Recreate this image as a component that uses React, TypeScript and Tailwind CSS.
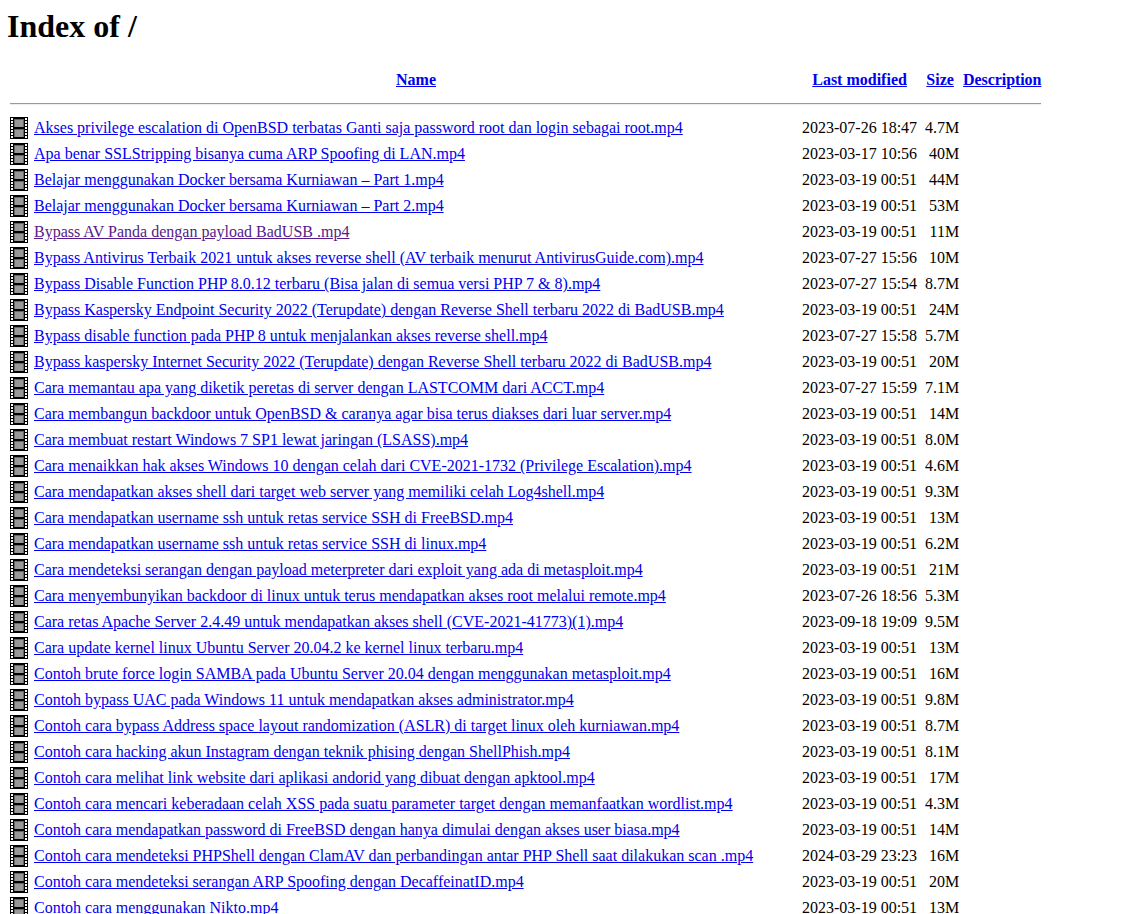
const serif = "font-['Liberation_Serif','Times_New_Roman',serif]";

const rows: [string, string, string, boolean?][] = [
  ["Akses privilege escalation di OpenBSD terbatas Ganti saja password root dan login sebagai root.mp4", "2023-07-26 18:47", "4.7M"],
  ["Apa benar SSLStripping bisanya cuma ARP Spoofing di LAN.mp4", "2023-03-17 10:56", "40M"],
  ["Belajar menggunakan Docker bersama Kurniawan – Part 1.mp4", "2023-03-19 00:51", "44M"],
  ["Belajar menggunakan Docker bersama Kurniawan – Part 2.mp4", "2023-03-19 00:51", "53M"],
  ["Bypass AV Panda dengan payload BadUSB .mp4", "2023-03-19 00:51", "11M", true],
  ["Bypass Antivirus Terbaik 2021 untuk akses reverse shell (AV terbaik menurut AntivirusGuide.com).mp4", "2023-07-27 15:56", "10M"],
  ["Bypass Disable Function PHP 8.0.12 terbaru (Bisa jalan di semua versi PHP 7 & 8).mp4", "2023-07-27 15:54", "8.7M"],
  ["Bypass Kaspersky Endpoint Security 2022 (Terupdate) dengan Reverse Shell terbaru 2022 di BadUSB.mp4", "2023-03-19 00:51", "24M"],
  ["Bypass disable function pada PHP 8 untuk menjalankan akses reverse shell.mp4", "2023-07-27 15:58", "5.7M"],
  ["Bypass kaspersky Internet Security 2022 (Terupdate) dengan Reverse Shell terbaru 2022 di BadUSB.mp4", "2023-03-19 00:51", "20M"],
  ["Cara memantau apa yang diketik peretas di server dengan LASTCOMM dari ACCT.mp4", "2023-07-27 15:59", "7.1M"],
  ["Cara membangun backdoor untuk OpenBSD & caranya agar bisa terus diakses dari luar server.mp4", "2023-03-19 00:51", "14M"],
  ["Cara membuat restart Windows 7 SP1 lewat jaringan (LSASS).mp4", "2023-03-19 00:51", "8.0M"],
  ["Cara menaikkan hak akses Windows 10 dengan celah dari CVE-2021-1732 (Privilege Escalation).mp4", "2023-03-19 00:51", "4.6M"],
  ["Cara mendapatkan akses shell dari target web server yang memiliki celah Log4shell.mp4", "2023-03-19 00:51", "9.3M"],
  ["Cara mendapatkan username ssh untuk retas service SSH di FreeBSD.mp4", "2023-03-19 00:51", "13M"],
  ["Cara mendapatkan username ssh untuk retas service SSH di linux.mp4", "2023-03-19 00:51", "6.2M"],
  ["Cara mendeteksi serangan dengan payload meterpreter dari exploit yang ada di metasploit.mp4", "2023-03-19 00:51", "21M"],
  ["Cara menyembunyikan backdoor di linux untuk terus mendapatkan akses root melalui remote.mp4", "2023-07-26 18:56", "5.3M"],
  ["Cara retas Apache Server 2.4.49 untuk mendapatkan akses shell (CVE-2021-41773)(1).mp4", "2023-09-18 19:09", "9.5M"],
  ["Cara update kernel linux Ubuntu Server 20.04.2 ke kernel linux terbaru.mp4", "2023-03-19 00:51", "13M"],
  ["Contoh brute force login SAMBA pada Ubuntu Server 20.04 dengan menggunakan metasploit.mp4", "2023-03-19 00:51", "16M"],
  ["Contoh bypass UAC pada Windows 11 untuk mendapatkan akses administrator.mp4", "2023-03-19 00:51", "9.8M"],
  ["Contoh cara bypass Address space layout randomization (ASLR) di target linux oleh kurniawan.mp4", "2023-03-19 00:51", "8.7M"],
  ["Contoh cara hacking akun Instagram dengan teknik phising dengan ShellPhish.mp4", "2023-03-19 00:51", "8.1M"],
  ["Contoh cara melihat link website dari aplikasi andorid yang dibuat dengan apktool.mp4", "2023-03-19 00:51", "17M"],
  ["Contoh cara mencari keberadaan celah XSS pada suatu parameter target dengan memanfaatkan wordlist.mp4", "2023-03-19 00:51", "4.3M"],
  ["Contoh cara mendapatkan password di FreeBSD dengan hanya dimulai dengan akses user biasa.mp4", "2023-03-19 00:51", "14M"],
  ["Contoh cara mendeteksi PHPShell dengan ClamAV dan perbandingan antar PHP Shell saat dilakukan scan .mp4", "2024-03-29 23:23", "16M"],
  ["Contoh cara mendeteksi serangan ARP Spoofing dengan DecaffeinatID.mp4", "2023-03-19 00:51", "20M"],
  ["Contoh cara menggunakan Nikto.mp4", "2023-03-19 00:51", "13M"],
];

function MovieIcon() {
  return (
    <svg width="20" height="22" viewBox="0 0 20 22" shapeRendering="crispEdges" className="block">
      <rect x="0" y="0" width="18" height="22" fill="#000" />
      {[1, 4, 7, 10, 13, 16, 19].map((y) => (
        <g key={y}>
          <rect x="1" y={y} width="2" height="2" fill="#fff" />
          <rect x="15" y={y} width="2" height="2" fill="#fff" />
        </g>
      ))}
      <rect x="4" y="2" width="10" height="8" fill="#666" />
      <rect x="5" y="3" width="8" height="7" fill="#999" />
      <rect x="4" y="12" width="10" height="8" fill="#666" />
      <rect x="5" y="13" width="8" height="7" fill="#999" />
    </svg>
  );
}

export default function App() {
  return (
    <div className={`h-[914px] overflow-hidden bg-white text-base leading-[normal] text-black ${serif}`}>
      <div className="pt-2 pl-[7px]">
        <h1 className="text-[32px] leading-[37px] font-bold">Index of /</h1>
        <table className="mt-5 border-separate border-spacing-0.5">
          <tbody>
            <tr>
              <th className="h-[26px] w-[22px] p-px" />
              <th className="w-[766px] p-px text-center"><a href="#" className="text-[#0000ee] underline">Name</a></th>
              <th className="p-px text-center"><a href="#" className="text-[#0000ee] underline">Last modified</a></th>
              <th className="w-[40px] p-px text-center"><a href="#" className="text-[#0000ee] underline">Size</a></th>
              <th className="p-px text-center"><a href="#" className="tracking-[-0.08px] text-[#0000ee] underline">Description</a></th>
            </tr>
            <tr>
              <th colSpan={5} className="p-px">
                <hr className="mt-[7px] mb-2 border-t border-b border-t-[#9a9a9a] border-b-[#eeeeee]" />
              </th>
            </tr>
            {rows.map(([name, date, size, visited]) => (
              <tr key={name}>
                <td className="p-px align-top"><MovieIcon /></td>
                <td className="p-px whitespace-nowrap">
                  <a href="#" className={visited ? "text-[#551a8b] underline" : "text-[#0000ee] underline"}>{name}</a>
                </td>
                <td className="p-px text-right whitespace-nowrap">{date}</td>
                <td className="p-px text-right">{size}</td>
                <td className="p-px">&nbsp;</td>
              </tr>
            ))}
          </tbody>
        </table>
      </div>
    </div>
  );
}
